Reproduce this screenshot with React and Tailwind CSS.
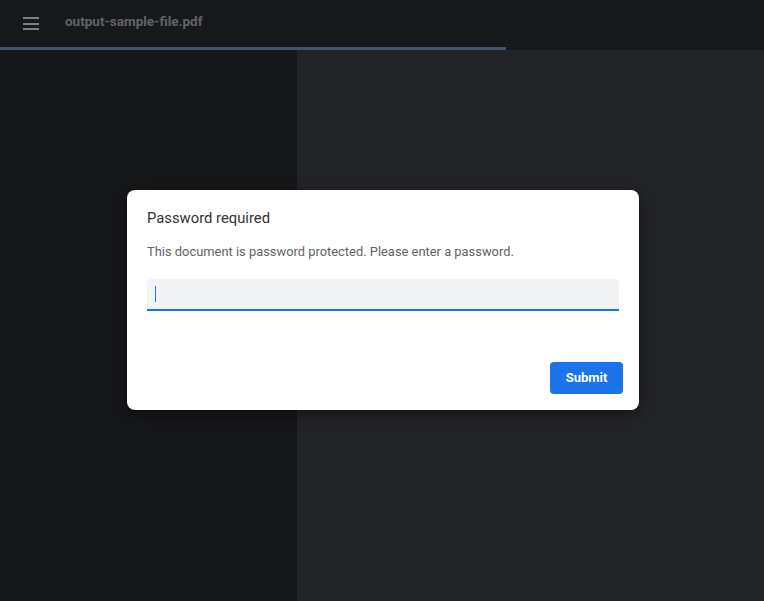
import React, { useState } from 'react';

const App = () => {
    const [password, setPassword] = useState('');

    return (
        <div className="h-[601px] w-full flex flex-col overflow-hidden bg-[#232427]" style={{ fontFamily: 'Roboto, "Liberation Sans", sans-serif' }}>
            {/* Toolbar */}
            <div className="relative h-[50px] shrink-0 bg-[#17181b] flex items-center">
                <button className="ml-[23px] flex flex-col gap-[3.5px] pb-[3px]">
                    <span className="block w-4 h-[2px] bg-[#7d7f83]"></span>
                    <span className="block w-4 h-[2px] bg-[#7d7f83]"></span>
                    <span className="block w-4 h-[2px] bg-[#7d7f83]"></span>
                </button>
                <div className="ml-[26px] pb-[7px] text-[13.5px] font-bold text-[#616367]">output-sample-file.pdf</div>
                {/* progress */}
                <div className="absolute left-0 bottom-0 h-[3px] w-[506px] bg-[#435470]"></div>
            </div>

            {/* Body */}
            <div className="relative flex flex-1">
                <div className="w-[297px] bg-[#161719]"></div>
                <div className="flex-1 bg-[#232427]"></div>

                {/* Dialog */}
                <div className="absolute left-[127px] top-[140px] w-[512px] h-[220px] bg-white rounded-lg shadow-[0_4px_16px_rgba(0,0,0,0.45)] px-5 pt-[18px] flex flex-col">
                    <h2 className="text-[14.8px] text-[#333] leading-5">Password required</h2>
                    <p className="mt-4 text-[12.9px] text-[#5f6368] leading-4">
                        This document is password protected. Please enter a password.
                    </p>
                    <div className="mt-[19px] h-8 bg-[#f1f3f4] rounded-t border-b-2 border-[#1a73e8] flex items-center px-2">
                        <span className="w-px h-4 bg-[#1a73e8]"></span>
                        <input
                            type="password"
                            value={password}
                            onChange={(e) => setPassword(e.target.value)}
                            className="flex-1 bg-transparent outline-none text-sm"
                        />
                    </div>
                    <div className="flex justify-end mt-[51px] -mr-1">
                        <button className="w-[73px] h-8 bg-[#1a73e8] text-white text-[13px] font-bold rounded">
                            Submit
                        </button>
                    </div>
                </div>
            </div>
        </div>
    );
};

export default App;
